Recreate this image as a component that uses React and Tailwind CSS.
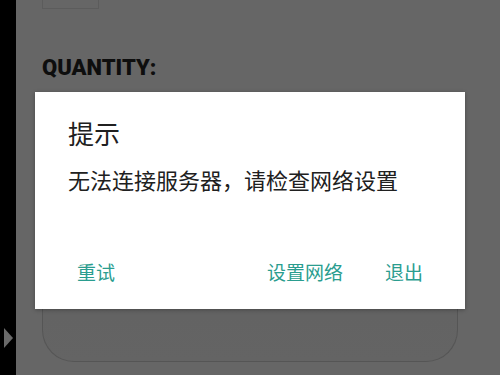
export default function App() {
  const cjk = { fontFamily: '"Noto Sans CJK SC", "Noto Sans", sans-serif' };
  return (
    <div className="w-[500px] h-[375px] overflow-hidden flex bg-[#666666]">
      {/* left rail */}
      <div className="w-[16px] h-full bg-black flex flex-col justify-end pb-[27px] pl-[4px]">
        <div className="w-0 h-0 border-y-[10px] border-y-transparent border-l-[9px] border-l-[#6a6a6a]" />
      </div>

      <div className="relative flex-1 h-full">
        {/* page behind the dim */}
        <div className="pl-[26px] pr-[42px]">
          <div className="w-[57px] h-[9px] border border-t-0 border-[#5c5c5c]" />
          <div
            className="mt-[46px] text-[22px] font-black leading-[26px] text-[#0e0e0e]"
            style={{ fontFamily: "Roboto, 'Liberation Sans', sans-serif" }}
          >
            QUANTITY:
          </div>
          <div className="mt-[12px] h-[269px] rounded-b-[32px] border border-t-0 border-[#555555] bg-gradient-to-b from-[#5e5e5e] to-[#646464]" />
        </div>

        {/* dialog */}
        <div
          className="absolute left-[19px] top-[92px] w-[430px] h-[217px] bg-white shadow-[0_1px_4px_rgba(0,0,0,0.3)] flex flex-col"
          style={cjk}
        >
          <div className="pl-[33px] pt-[28px] text-[26px] leading-[26px] text-[#202020]">提示</div>
          <div className="pl-[33px] mt-[21px] text-[22px] leading-[24px] text-[#202020]">
            无法连接服务器，请检查网络设置
          </div>
          <div className="mt-auto mb-[26px] flex items-center text-[19px] leading-[22px] text-[#2a9d8f]">
            <span className="ml-[42px]">重试</span>
            <span className="ml-auto">设置网络</span>
            <span className="ml-[42px] mr-[42px]">退出</span>
          </div>
        </div>
      </div>
    </div>
  );
}
